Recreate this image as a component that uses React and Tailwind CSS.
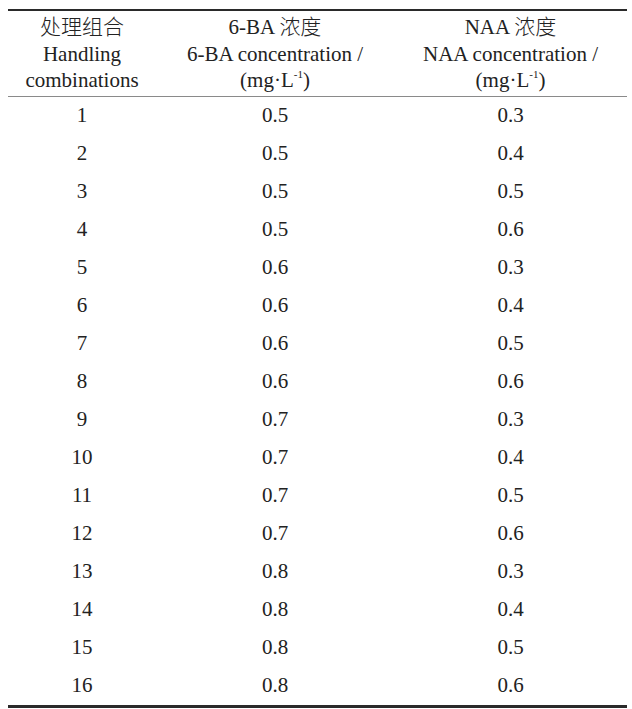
const rows = [
  [1, '0.5', '0.3'],
  [2, '0.5', '0.4'],
  [3, '0.5', '0.5'],
  [4, '0.5', '0.6'],
  [5, '0.6', '0.3'],
  [6, '0.6', '0.4'],
  [7, '0.6', '0.5'],
  [8, '0.6', '0.6'],
  [9, '0.7', '0.3'],
  [10, '0.7', '0.4'],
  [11, '0.7', '0.5'],
  [12, '0.7', '0.6'],
  [13, '0.8', '0.3'],
  [14, '0.8', '0.4'],
  [15, '0.8', '0.5'],
  [16, '0.8', '0.6'],
];

const cols = 'grid grid-cols-[148px_238px_1fr]';

function Unit() {
  return (
    <span>
      (mg·L<sup className="text-[11px] top-[-0.8em]">-1</sup>)
    </span>
  );
}

export default function App() {
  return (
    <div
      className="min-h-screen bg-white pl-[8px] pr-[5px] pt-[9px] text-[21px] text-[#222]"
      style={{ fontFamily: '"Liberation Serif", "Noto Sans CJK SC", serif' }}
    >
      <div className="border-t-2 border-b-[3px] border-[#2a2a2a]">
        {/* header */}
        <div className={`${cols} border-b border-[#8a8a8a] pt-[3px] pb-[2px] leading-[26.5px] text-center`}>
          <div className="flex flex-col">
            <span className="font-light">处理组合</span>
            <span>Handling</span>
            <span>combinations</span>
          </div>
          <div className="flex flex-col">
            <span>6-BA <span className="font-light">浓度</span></span>
            <span>6-BA concentration /</span>
            <Unit />
          </div>
          <div className="flex flex-col">
            <span>NAA <span className="font-light">浓度</span></span>
            <span>NAA concentration /</span>
            <Unit />
          </div>
        </div>

        {/* body */}
        {rows.map(([n, ba, naa]) => (
          <div key={n} className={`${cols} h-[38px] items-center text-center`}>
            <span>{n}</span>
            <span>{ba}</span>
            <span>{naa}</span>
          </div>
        ))}
      </div>
    </div>
  );
}
